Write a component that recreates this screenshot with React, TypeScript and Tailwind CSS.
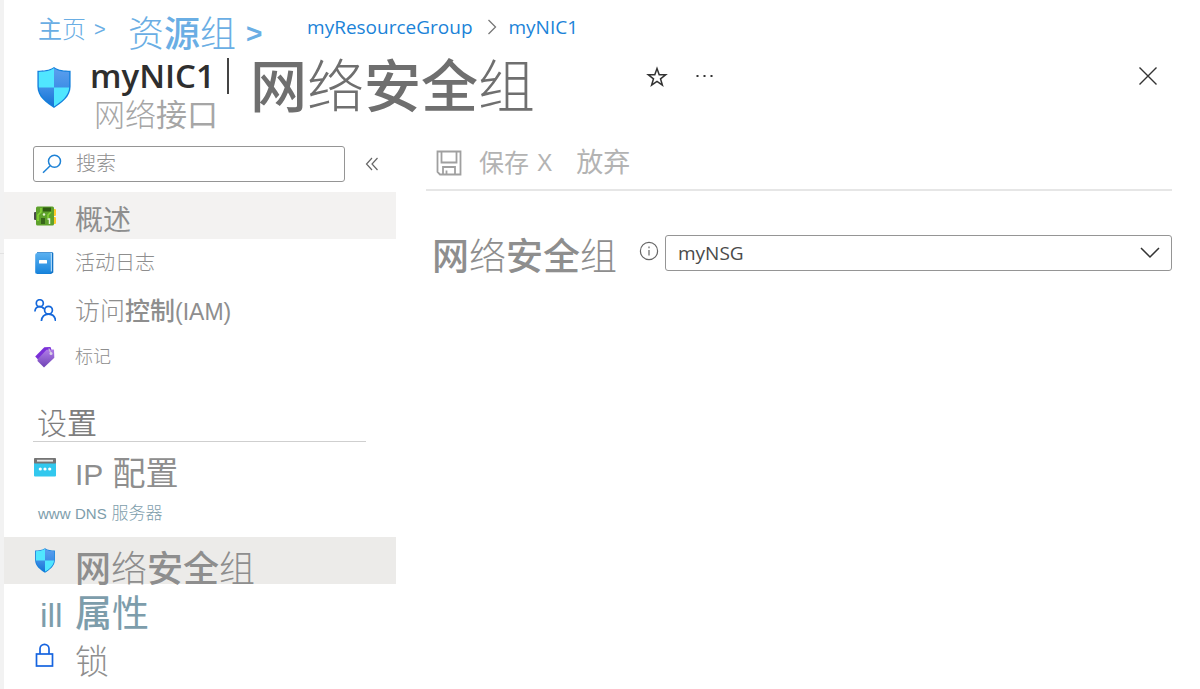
import React from "react";

const cjk = "font-['Liberation_Sans','Noto_Sans_CJK_SC',sans-serif]";
const ui = "font-['Open_Sans','Noto_Sans_CJK_SC',sans-serif]";

function Thin({ children }: { children: React.ReactNode }) {
  return <span className="font-light">{children}</span>;
}

function Heavy({ children }: { children: React.ReactNode }) {
  return <span className="font-medium">{children}</span>;
}

function SecurityGroupText() {
  return (
    <>
      <Heavy>网</Heavy>
      <Thin>络</Thin>
      <Heavy>安全</Heavy>
      <Thin>组</Thin>
    </>
  );
}

function ShieldIcon({ className, id }: { className: string; id: string }) {
  return (
    <svg viewBox="0 0 36 42" className={className} aria-hidden="true">
      <defs>
        <linearGradient id={id} x1="0" y1="0" x2="0" y2="1">
          <stop offset="0" stopColor="#5ea0ef" />
          <stop offset="0.5" stopColor="#3f8fe6" />
          <stop offset="1" stopColor="#0f70d2" />
        </linearGradient>
        <clipPath id={`${id}-clip`}>
          <path d="M18 1.800c4.600 3.200 9.500 3.400 15.200 3.600v14.600c0 9.500-8.500 15.500-15.200 20C11.300 35.500 2.800 29.500 2.800 20V5.400C8.500 5.200 13.400 5 18 1.800z" />
        </clipPath>
      </defs>
      <path
        d="M18 .4c5 3.400 10 3.600 16.600 3.800v15.900c0 10.500-9.200 16.600-16.600 21.500C10.600 36.700 1.400 30.600 1.400 20.100V4.200C8 4 13 3.800 18 .4z"
        fill="#1380dc"
      />
      <g clipPath={`url(#${id}-clip)`}>
        <rect width="36" height="42" fill={`url(#${id})`} />
        <rect width="18" height="21" fill="#50e6ff" />
        <rect x="18" y="21" width="18" height="21" fill="#50e6ff" />
      </g>
    </svg>
  );
}

function NicIcon() {
  return (
    <svg viewBox="0 0 22 20" className="h-5 w-[22px]" aria-hidden="true">
      <rect x="0" y="6" width="3" height="8" rx="1" fill="#4a4a4a" />
      <rect x="18" y="3" width="4" height="7" rx="1" fill="#ffca28" />
      <rect x="18" y="11" width="4" height="7" rx="1" fill="#ffca28" />
      <rect x="2" y="0.500" width="18" height="19" rx="1.500" fill="#5ea12c" />
      <path d="M4 15V9l3-3V2M17 6l-3 3v3" stroke="#86d633" strokeWidth="1.500" fill="none" />
      <rect x="9" y="1.500" width="8" height="4" fill="#2f5b12" />
      <rect x="7" y="12" width="4" height="6" fill="#37651a" />
      <circle cx="10" cy="8.500" r="1.200" fill="#e3f5d2" />
      <path d="M13.500 13h2v5" stroke="#e8f5dc" strokeWidth="1.500" fill="none" />
    </svg>
  );
}

function BookIcon() {
  return (
    <svg viewBox="0 0 22 22" className="size-[22px]" aria-hidden="true">
      <defs>
        <linearGradient id="book" x1="0" y1="0" x2="0" y2="1">
          <stop offset="0" stopColor="#5ab0f0" />
          <stop offset="1" stopColor="#1683dc" />
        </linearGradient>
      </defs>
      <path d="M3 .3h15a1.300 1.300 0 0 1 1.300 1.300V20.500L17 22H3z" fill="#1173c7" />
      <path d="M3.500 1h14.500v18.500H3.500z" fill="#a9d6f7" />
      <path d="M1.200 3a2 2 0 0 1 2-2H16a.8.8 0 0 1 .8.8V21a.8.8 0 0 1-.8.8H2.700a1.500 1.500 0 0 1-1.500-1.500z" fill="url(#book)" />
      <rect x="5" y="8" width="8" height="3.400" rx=".5" fill="#fff" />
    </svg>
  );
}

function PeopleIcon() {
  return (
    <svg viewBox="0 0 22 22" className="size-[22px]" fill="none" stroke="#1568db" strokeWidth="1.700" aria-hidden="true">
      <circle cx="5.800" cy="4.200" r="3.500" />
      <path d="M.9 12.500c.2-3 2.200-4.800 4.900-4.800 1.900 0 3.400.9 4.200 2.400" />
      <circle cx="14.500" cy="11.200" r="3.900" />
      <path d="M7.400 22c.4-4.200 3.200-6.900 7.100-6.900s6.700 2.700 7.100 6.900" />
    </svg>
  );
}

function TagIcon() {
  return (
    <svg viewBox="0 0 22 22" className="size-[22px]" aria-hidden="true">
      <defs>
        <linearGradient id="tag" x1="0" y1="0" x2="0" y2="1">
          <stop offset="0" stopColor="#b07ce8" />
          <stop offset="1" stopColor="#6f43b5" />
        </linearGradient>
      </defs>
      <path d="M1.200 10.500 10.300 1.200 16.500 1l1 3L4.500 14z" fill="#7a2fd8" />
      <path d="M3.800 13 12.500 3.800l7.500-.3.300 8.300L10 21.500 3.500 15z" fill="url(#tag)" />
      <path d="M17 7.500 14.800 2.500" stroke="#c9bdd8" strokeWidth="1.200" />
      <circle cx="17" cy="7.500" r="1.500" fill="#d9d0e6" />
    </svg>
  );
}

function IpIcon() {
  return (
    <svg viewBox="0 0 22 20" className="h-5 w-[22px]" aria-hidden="true">
      <rect x="0" y="5" width="22" height="14.500" rx="1" fill="#32c8ee" />
      <rect x="0" y="1" width="22" height="5.500" rx=".8" fill="#757575" />
      <rect x="3" y="2.800" width="16" height="1.800" fill="#e8e8e8" />
      <circle cx="6.300" cy="12" r="1.600" fill="#fff" />
      <circle cx="11" cy="12" r="1.600" fill="#fff" />
      <circle cx="15.700" cy="12" r="1.600" fill="#fff" />
    </svg>
  );
}

function LockIcon() {
  return (
    <svg viewBox="0 0 22 24" className="h-6 w-[22px]" fill="none" stroke="#1664e0" strokeWidth="1.700" aria-hidden="true">
      <rect x="2.500" y="11" width="16" height="12" />
      <path d="M6 11V5.800a4.500 4.500 0 0 1 9 0V11" />
    </svg>
  );
}

function NavRow({
  icon,
  bg = "",
  text = "",
  children,
}: {
  icon: React.ReactNode;
  bg?: string;
  text?: string;
  children: React.ReactNode;
}) {
  return (
    <li>
      <a href="#" className={`flex h-[47px] items-center pl-[30px] text-[#8e8e8e] ${bg}`}>
        <span className="flex w-[41px] shrink-0 items-center">{icon}</span>
        <span className={`leading-none whitespace-nowrap ${text}`}>{children}</span>
      </a>
    </li>
  );
}

export default function App() {
  return (
    <div className={`flex min-h-screen bg-white ${cjk}`}>
      <div className="flex w-1 shrink-0 flex-col bg-[#f2f2f2]">
        <div className="h-[254px] border-b border-[#e2e2e2]" />
      </div>
      <div className="min-w-0 flex-1">
        <header className="pl-[34px]">
          <nav aria-label="Breadcrumb" className="flex h-[58px] items-center whitespace-nowrap text-[#6aaee4]">
            <a href="#" className="pt-0.5 text-2xl leading-none">
              主<Thin>页</Thin>
            </a>
            <span className="ml-2 w-[34px] text-xl leading-none">&gt;</span>
            <a href="#" className="pt-3 text-[36px] leading-none">
              <Thin>资</Thin>
              <Heavy>源</Heavy>
              <Thin>组</Thin>
            </a>
            <span className="ml-2.5 w-[61px] pt-2.5 text-[28px] leading-none font-bold">&gt;</span>
            <a href="#" className={`pb-1 text-[19px] leading-none text-[#1b83d8] ${ui}`}>
              myResourceGroup
            </a>
            <svg viewBox="0 0 10 16" className="mr-3 ml-3.5 mb-1 h-4 w-2.5" fill="none" stroke="#777" strokeWidth="1.300" aria-hidden="true">
              <path d="M1.500 1 8.500 8l-7 7" />
            </svg>
            <a href="#" className={`pb-1 text-[19px] leading-none text-[#1b83d8] ${ui}`}>
              myNIC1
            </a>
          </nav>
          <div className="flex h-[76px] items-start whitespace-nowrap">
            <ShieldIcon id="shield-large" className="mt-2 -ml-0.5 h-[43px] w-9 shrink-0" />
            <div className="ml-[18px] w-40 shrink-0">
              <div className={`flex items-center text-[33px] leading-9 font-semibold text-[#2e2e2e] ${ui}`}>
                myNIC1
                <span className="ml-3 h-9 w-0.5 bg-[#444]" />
              </div>
              <p className="pl-1 text-[31px] leading-[44px] text-[#a6a6a6]">
                <Thin>网络</Thin>接口
              </p>
            </div>
            <h1 className="text-[57px] leading-[58px] text-[#6f6f6f]">
              <SecurityGroupText />
            </h1>
            <button type="button" aria-label="收藏" className="mt-2 ml-[111px] p-0">
              <svg viewBox="0 0 22 22" className="size-[22px]" fill="none" stroke="#333" strokeWidth="1.500" aria-hidden="true">
                <path d="m11 2.500 2.200 6.200 6.500.1-5.200 4 1.900 6.400L11 15.400l-5.400 3.800 1.900-6.400-5.200-4 6.500-.1z" />
              </svg>
            </button>
            <button type="button" aria-label="更多" className="mt-2 ml-7 p-0">
              <svg viewBox="0 0 18 20" className="h-5 w-[18px]" fill="#333" aria-hidden="true">
                <rect x="0.500" y="9" width="2" height="2" />
                <rect x="7.500" y="9" width="2" height="2" />
                <rect x="14.500" y="9" width="2" height="2" />
              </svg>
            </button>
            <button type="button" aria-label="关闭" className="mt-2 mr-[42px] ml-auto p-0">
              <svg viewBox="0 0 20 20" className="size-5" fill="none" stroke="#333" strokeWidth="1.400" aria-hidden="true">
                <path d="m1.500 1.500 17 17M18.500 1.500l-17 17" />
              </svg>
            </button>
          </div>
        </header>

        <div className="flex pt-3">
          <aside className="w-[392px] shrink-0">
            <div className="flex items-center pl-[29px]">
              <label className="flex h-9 w-[312px] items-center rounded-[3px] border border-[#959595] pl-2">
                <svg viewBox="0 0 20 20" className="size-5 shrink-0" fill="none" stroke="#1e82d6" strokeWidth="1.500" aria-hidden="true">
                  <circle cx="12.500" cy="7.300" r="6" />
                  <path d="m8.200 11.700-7.200 7" />
                </svg>
                <input
                  type="search"
                  aria-label="搜索"
                  placeholder="搜索"
                  className="ml-3.5 min-w-0 flex-1 bg-transparent text-[20px] font-light text-[#8e8e8e] outline-none placeholder:text-[#8e8e8e]"
                />
              </label>
              <button type="button" aria-label="折叠" className="ml-5 p-0">
                <svg viewBox="0 0 14 14" className="size-3.5" fill="none" stroke="#666" strokeWidth="1.200" aria-hidden="true">
                  <path d="M7 1 1.500 7 7 13M12.500 1 7 7l5.500 6" />
                </svg>
              </button>
            </div>

            <ul className="pt-2.5">
              <NavRow icon={<NicIcon />} bg="bg-[#f3f2f1]" text="pt-2.5 text-[28px]">
                概述
              </NavRow>
              <NavRow icon={<BookIcon />} text="text-[20px] font-light">
                活动日志
              </NavRow>
              <NavRow icon={<PeopleIcon />} text="pt-1 text-[25px]">
                <Thin>访问</Thin>
                <Heavy>控制</Heavy>
                <span className="text-[23px]">(IAM)</span>
              </NavRow>
              <NavRow icon={<TagIcon />} text="text-lg leading-none font-light">
                标记
              </NavRow>
            </ul>

            <h2 className="mr-[30px] ml-[29px] flex h-[62px] items-end border-b border-[#cfcfcf] pb-0.5 pl-1 text-[30px] leading-none text-[#7f7f7f]">
              <Thin>设</Thin>
              <span>置</span>
            </h2>

            <ul className="pt-px">
              <NavRow icon={<IpIcon />} text="pt-3.5 text-[33px]">
                <span className="text-[30px]">IP</span> 配置
              </NavRow>
              <NavRow
                icon={<span className="pl-1 text-[15px] leading-none text-[#7d9dab]">www</span>}
                text="text-[17px] font-light text-[#7d9dab]"
              >
                <span className="text-[15px]">DNS</span> 服务器
              </NavRow>
              <NavRow icon={<ShieldIcon id="shield-small" className="h-[25px] w-[22px]" />} bg="bg-[#ecebe9]" text="pt-4.5 text-[36px]">
                <SecurityGroupText />
              </NavRow>
              <NavRow
                icon={<span className="pt-3.5 pl-1.5 text-[34px] leading-none text-[#7d9dab]">ill</span>}
                text="pt-3.5 text-[37px] text-[#7d9dab]"
              >
                <Heavy>属</Heavy>性
              </NavRow>
              <NavRow icon={<LockIcon />} text="pt-3.5 text-[34px]">
                <Thin>锁</Thin>
              </NavRow>
            </ul>
          </aside>

          <main className="min-w-0 flex-1 pr-7 pl-[30px]">
            <div className="flex h-[45px] items-start border-b-2 border-[#e6e6e6] pl-2.5 whitespace-nowrap text-[#b3b3b3]">
              <button type="button" className="flex items-center pt-1 text-[25px] leading-none">
                <svg viewBox="0 0 26 26" className="mr-[17px] size-[26px]" fill="none" stroke="#a0a0a0" strokeWidth="1.800" aria-hidden="true">
                  <path d="M1.500 1.500h23v23H4l-2.500-2.500zM5.500 1.500v11h15v-11M7 24.500v-7.500h12v7.500M10.500 24.500v-4" />
                </svg>
                保存 <span className="ml-2 text-[23px]">X</span>
              </button>
              <button type="button" className="ml-6 pt-1 text-[27px] leading-none">
                放弃
              </button>
            </div>
            <div className="flex items-start pt-11">
              <label htmlFor="nsg" className="w-[213px] shrink-0 pl-1.5 text-[37px] leading-[46px] whitespace-nowrap text-[#8e8e8e]">
                <SecurityGroupText />
              </label>
              <svg viewBox="0 0 20 20" className="mt-1.5 size-5 shrink-0" fill="none" stroke="#666" strokeWidth="1.200" aria-hidden="true">
                <circle cx="10" cy="10" r="8.600" />
                <path d="M10 9v5.500M10 5.500v1.800" />
              </svg>
              <div className="relative ml-1.5 min-w-0 flex-1">
                <select
                  id="nsg"
                  className={`h-9 w-full appearance-none rounded-[3px] border border-[#959595] bg-white pl-3 text-[19px] text-[#4a4a4a] ${ui}`}
                >
                  <option>myNSG</option>
                </select>
                <svg
                  viewBox="0 0 20 12"
                  className="pointer-events-none absolute top-3 right-3 h-3 w-5"
                  fill="none"
                  stroke="#333"
                  strokeWidth="1.500"
                  aria-hidden="true"
                >
                  <path d="m1 1 9 9 9-9" />
                </svg>
              </div>
            </div>
          </main>
        </div>
      </div>
    </div>
  );
}
